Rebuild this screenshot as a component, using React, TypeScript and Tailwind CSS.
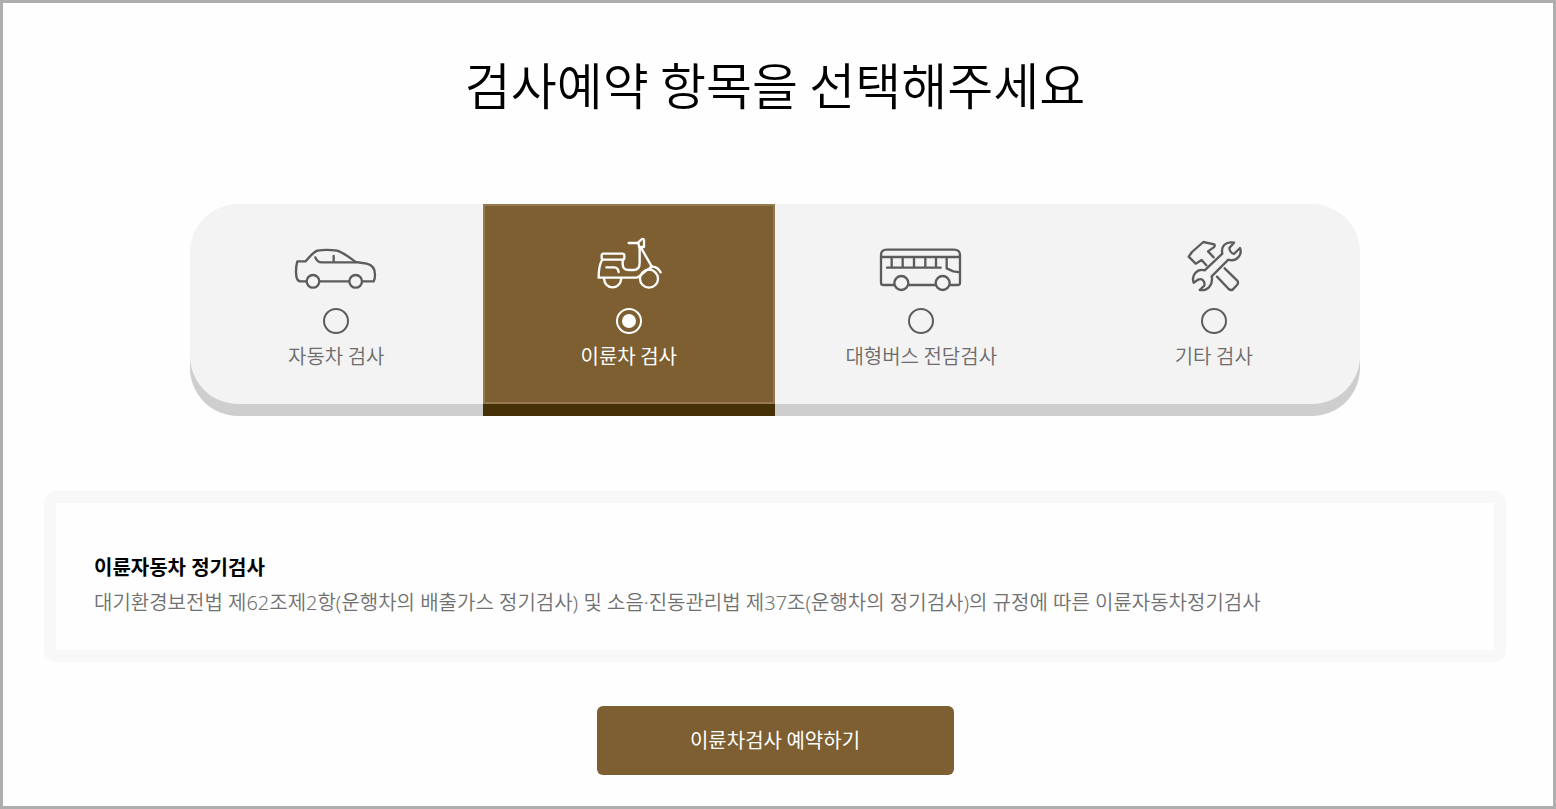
import { useState } from "react"
import type { ReactNode } from "react"

type Inspection = {
  id: string
  label: string
  title: string
  description: string
  action: string
  viewBox: string
  icon: ReactNode
}

const INSPECTIONS: Inspection[] = [
  {
    id: "car",
    label: "자동차 검사",
    title: "자동차 정기검사",
    description: "자동차관리법 제43조의 규정에 따른 자동차정기검사",
    action: "자동차검사 예약하기",
    viewBox: "18 18 270 168",
    icon: (
      <>
        <path d="M64 154H47Q36 154 34 138Q31 115 37 94H62C75 78 85 66 97 62Q125 57 156 62C175 67 192 82 212 96L245 101C262 105 270 116 270 134Q270 148 266 154H233M104 154H191" />
        <path d="M91 82C94 90 99 97 110 97H212M146 78V97" />
        <circle cx="84" cy="154" r="19" />
        <circle cx="212" cy="154" r="19" />
      </>
    ),
  },
  {
    id: "motorcycle",
    label: "이륜차 검사",
    title: "이륜자동차 정기검사",
    description:
      "대기환경보전법 제62조제2항(운행차의 배출가스 정기검사) 및 소음·진동관리법 제37조(운행차의 정기검사)의 규정에 따른 이륜자동차정기검사",
    action: "이륜차검사 예약하기",
    viewBox: "40 33 270 168",
    icon: (
      <>
        <rect x="93" y="86" width="68" height="18" rx="6" />
        <path d="M95 104C88 114 84 132 84 158H199C212 152 222 136 242 127" />
        <path d="M156 104V118C156 130 163 135 174 135H188C200 135 207 128 207 114V72L203 54H174" />
        <path d="M203 52L214 42Q220 40 220 47V66L207 66M212 70L243 124M240 126C252 123 263 130 270 142" />
        <path d="M107 127H131Q142 128 144 141M100 160C102 196 149 196 152 160" />
        <circle cx="235" cy="161" r="27" />
      </>
    ),
  },
  {
    id: "bus",
    label: "대형버스 전담검사",
    title: "대형버스 정기검사",
    description: "자동차관리법 제43조의 규정에 따른 대형버스정기검사",
    action: "대형버스검사 예약하기",
    viewBox: "108 3 270 168",
    icon: (
      <>
        <path d="M163 150H131Q123 150 123 143V60Q123 44 140 44H342Q360 44 360 60V143Q360 150 352 150H331M206 150H287" />
        <path d="M123 66H360M141 98H302M155 66V98M188 66V98M222 66V98M256 66V98M288 66V98M320 66V100L340 109L360 112" />
        <circle cx="184" cy="144" r="21" />
        <circle cx="308" cy="144" r="21" />
      </>
    ),
  },
  {
    id: "etc",
    label: "기타 검사",
    title: "기타 검사",
    description: "자동차관리법의 규정에 따른 기타 검사",
    action: "기타검사 예약하기",
    viewBox: "10 18 270 168",
    icon: (
      <>
        <path d="M122 106L108 90L90 101L69 80L79 66L113 36L146 43Q149 48 144 52L127 64L144 82" />
        <path d="M177 115L214 151Q220 158 214 165L201 179Q195 182 189 177L154 140" />
        <path d="M117 121L170 71C165 49 180 33 205 38L191 54Q192 68 205 72L223 54C231 74 212 97 188 89L138 139C143 163 127 184 102 180L116 167C119 153 109 144 97 149L84 158C76 136 94 115 117 121Z" />
      </>
    ),
  },
]

export default function App() {
  const [selectedId, setSelectedId] = useState("motorcycle")
  const selected = INSPECTIONS.find((item) => item.id === selectedId) ?? INSPECTIONS[0]

  return (
    <main className="min-h-screen border-3 border-[#aeaeae] bg-[#fefefe] pt-[50px] pr-[47px] pb-7 pl-[41px] font-['Noto_Sans_CJK_KR',sans-serif] text-xl">
      <h1 id="inspection-heading" className="text-center text-[50px] leading-15 font-[350] text-black">
        검사예약 항목을 선택해주세요
      </h1>

      {/* Inspection type */}
      <div
        role="radiogroup"
        aria-labelledby="inspection-heading"
        className="mx-auto mt-[91px] grid max-w-[1170px] grid-cols-4 rounded-[48px] bg-[#f3f3f3] shadow-[0_12px_0_#cecece]"
      >
        {INSPECTIONS.map((item) => {
          const isActive = item.id === selectedId
          return (
            <label
              key={item.id}
              className={`flex h-50 cursor-pointer flex-col items-center border-2 pt-[30px] ${isActive ? "border-[#947a50] bg-[#7d5f32] font-normal text-white shadow-[0_12px_0_#463008]" : "border-transparent font-[350] text-[#5c5c5c]"}`}
            >
              <svg
                viewBox={item.viewBox}
                className="h-14 w-[90px]"
                fill="none"
                stroke="currentColor"
                strokeWidth="7"
                strokeLinecap="round"
                strokeLinejoin="round"
                aria-hidden="true"
              >
                {item.icon}
              </svg>
              <input
                type="radio"
                name="inspection"
                value={item.id}
                checked={isActive}
                onChange={() => setSelectedId(item.id)}
                className="mt-4 grid size-[26px] appearance-none place-items-center rounded-full border-2 border-current before:size-3.5 before:rounded-full checked:before:bg-current"
              />
              <span className={`mt-2 leading-7 ${isActive ? "text-white" : "text-[#6c6c6c]"}`}>{item.label}</span>
            </label>
          )
        })}
      </div>

      {/* Selected inspection details */}
      <section className="mt-[87px] rounded-xl border-12 border-[#f8f8f8] px-[38px] pt-[47px] pb-[30px] font-['Noto_Sans','Noto_Sans_CJK_KR',sans-serif] leading-[35px]">
        <h2 className="font-bold text-black">{selected.title}</h2>
        <p className="font-[350] text-[#707070]">{selected.description}</p>
      </section>

      <div className="mt-11 text-center">
        <button type="button" className="h-[69px] w-[357px] rounded-md bg-[#7d5f32] pb-0.5 text-white">
          {selected.action}
        </button>
      </div>
    </main>
  )
}
